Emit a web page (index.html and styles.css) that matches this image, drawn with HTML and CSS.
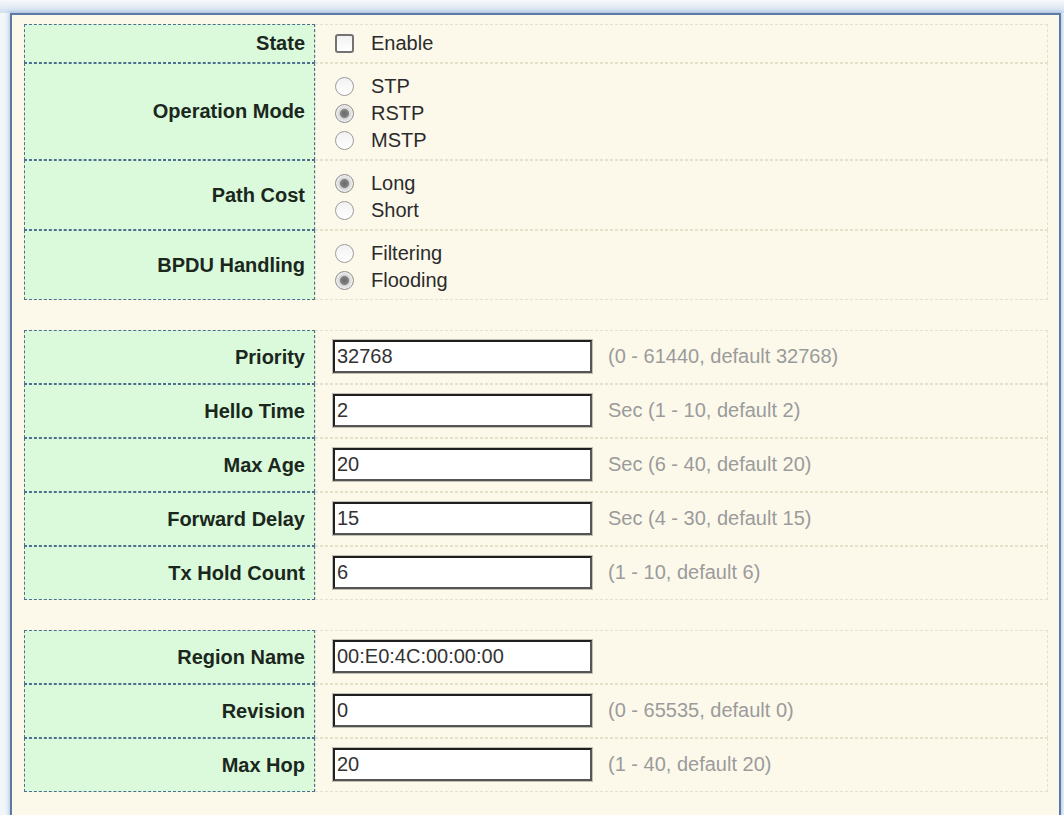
FILE: index.html
```html
<!DOCTYPE html>
<html lang="en">
<head>
    <meta charset="UTF-8">
    <meta name="viewport" content="width=device-width, initial-scale=1.0">
    <title>STP Global Settings</title>
    <link rel="stylesheet" href="styles.css">
</head>

<body>
    <div class="panel">

        <!-- general -->
        <div class="section">
            <div class="row">
                <div class="label">State</div>
                <div class="value single">
                    <label class="option"><input type="checkbox"> Enable</label>
                </div>
            </div>
            <div class="row">
                <div class="label">Operation Mode</div>
                <div class="value group">
                    <label class="option"><input type="radio" name="mode"> STP</label>
                    <label class="option"><input type="radio" name="mode" checked> RSTP</label>
                    <label class="option"><input type="radio" name="mode"> MSTP</label>
                </div>
            </div>
            <div class="row">
                <div class="label">Path Cost</div>
                <div class="value group">
                    <label class="option"><input type="radio" name="cost" checked> Long</label>
                    <label class="option"><input type="radio" name="cost"> Short</label>
                </div>
            </div>
            <div class="row">
                <div class="label">BPDU Handling</div>
                <div class="value group">
                    <label class="option"><input type="radio" name="bpdu"> Filtering</label>
                    <label class="option"><input type="radio" name="bpdu" checked> Flooding</label>
                </div>
            </div>
        </div>

        <!-- bridge timers -->
        <div class="section">
            <div class="row">
                <div class="label">Priority</div>
                <div class="value field">
                    <input type="text" value="32768">
                    <span class="hint">(0 - 61440, default 32768)</span>
                </div>
            </div>
            <div class="row">
                <div class="label">Hello Time</div>
                <div class="value field">
                    <input type="text" value="2">
                    <span class="hint">Sec (1 - 10, default 2)</span>
                </div>
            </div>
            <div class="row">
                <div class="label">Max Age</div>
                <div class="value field">
                    <input type="text" value="20">
                    <span class="hint">Sec (6 - 40, default 20)</span>
                </div>
            </div>
            <div class="row">
                <div class="label">Forward Delay</div>
                <div class="value field">
                    <input type="text" value="15">
                    <span class="hint">Sec (4 - 30, default 15)</span>
                </div>
            </div>
            <div class="row">
                <div class="label">Tx Hold Count</div>
                <div class="value field">
                    <input type="text" value="6">
                    <span class="hint">(1 - 10, default 6)</span>
                </div>
            </div>
        </div>

        <!-- MSTP region -->
        <div class="section">
            <div class="row">
                <div class="label">Region Name</div>
                <div class="value field">
                    <input type="text" value="00:E0:4C:00:00:00">
                </div>
            </div>
            <div class="row">
                <div class="label">Revision</div>
                <div class="value field">
                    <input type="text" value="0">
                    <span class="hint">(0 - 65535, default 0)</span>
                </div>
            </div>
            <div class="row">
                <div class="label">Max Hop</div>
                <div class="value field">
                    <input type="text" value="20">
                    <span class="hint">(1 - 40, default 20)</span>
                </div>
            </div>
        </div>

    </div>
</body>
</html>
```

FILE: styles.css
```css
body {
    margin: 0;
    padding: 0;
    font-family: 'Liberation Sans', Arial, sans-serif;
    font-size: 20px;
    color: #2a2a2a;
    background-color: #f2f5f9;
    background-image: linear-gradient(to bottom, #f7f9fc 0, #d2dfee 13px);
    background-size: 100% 13px;
    background-repeat: no-repeat;
}

.panel {
    margin: 13px 3px 0 10px;
    padding: 9px 11px 30px 12px;
    background-color: #fcf9eb;
    border: 2px solid #5a7ca4;
    border-bottom: none;
    box-shadow: 0 0 4px 1px rgba(120, 160, 210, 0.55);
}

.section + .section {
    margin-top: 30px;
}

.row {
    display: grid;
    grid-template-columns: 291px 1fr;
}

.label {
    display: flex;
    align-items: center;
    justify-content: flex-end;
    padding-right: 9px;
    background-color: #dafadb;
    border: 1px dashed #4e6f90;
    font-weight: bold;
    color: #1b271d;
}

.value {
    border: 1px dashed #e5e0c9;
    padding-left: 17px;
}

.value.single {
    padding-top: 5px;
    padding-bottom: 5px;
}

.value.group {
    padding-top: 9px;
    padding-bottom: 5px;
}

.value.field {
    display: flex;
    align-items: center;
    padding-top: 9px;
    padding-bottom: 10px;
}

.option {
    display: flex;
    align-items: center;
    height: 27px;
    color: #2b2b2b;
}

.option input {
    appearance: none;
    margin: 0 17px 0 2px;
    width: 19px;
    height: 19px;
    background: linear-gradient(#f2f2f2, #ffffff);
    border: 1px solid #8c8c8c;
}

.option input[type="checkbox"] {
    border-radius: 3px;
    border: 2px solid #737373;
}

.option input[type="radio"] {
    border-radius: 50%;
    border-color: #9c9c9c;
}

.option input[type="radio"]:checked {
    border-color: #8f8f8f;
    background: radial-gradient(circle, #6a6a6a 0, #808080 4px, #d2d2d2 5px, #efefef 8px);
}

.field input {
    box-sizing: border-box;
    width: 259px;
    height: 33px;
    margin: 0;
    padding: 0 2px;
    font-family: inherit;
    font-size: 20px;
    color: #333;
    background-color: #fff;
    border: 2px solid;
    border-color: #1f1f1f #555 #555 #1f1f1f;
    box-shadow: 0 0 0 1px rgba(60, 60, 60, 0.3);
    outline: none;
}

.hint {
    margin-left: 16px;
    color: #9b9b9b;
}
```
